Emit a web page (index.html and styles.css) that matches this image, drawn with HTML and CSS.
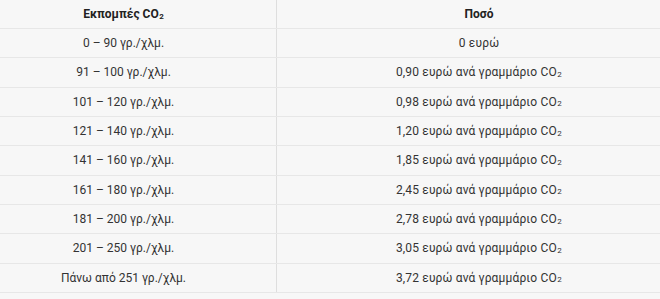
FILE: index.html
```html
<!DOCTYPE html>
<html lang="el">
<head>
<meta charset="utf-8">
<link rel="stylesheet" href="styles.css">
</head>
<body>
<div class="table">
  <div class="row head">
    <div class="cell left">Εκπομπές CO<span class="sub">2</span></div>
    <div class="cell right">Ποσό</div>
  </div>
  <div class="row"><div class="cell left">0 – 90 γρ./χλμ.</div><div class="cell right">0 ευρώ</div></div>
  <div class="row"><div class="cell left">91 – 100 γρ./χλμ.</div><div class="cell right">0,90 ευρώ ανά γραμμάριο CO<span class="sub">2</span></div></div>
  <div class="row"><div class="cell left">101 – 120 γρ./χλμ.</div><div class="cell right">0,98 ευρώ ανά γραμμάριο CO<span class="sub">2</span></div></div>
  <div class="row"><div class="cell left">121 – 140 γρ./χλμ.</div><div class="cell right">1,20 ευρώ ανά γραμμάριο CO<span class="sub">2</span></div></div>
  <div class="row"><div class="cell left">141 – 160 γρ./χλμ.</div><div class="cell right">1,85 ευρώ ανά γραμμάριο CO<span class="sub">2</span></div></div>
  <div class="row"><div class="cell left">161 – 180 γρ./χλμ.</div><div class="cell right">2,45 ευρώ ανά γραμμάριο CO<span class="sub">2</span></div></div>
  <div class="row"><div class="cell left">181 – 200 γρ./χλμ.</div><div class="cell right">2,78 ευρώ ανά γραμμάριο CO<span class="sub">2</span></div></div>
  <div class="row"><div class="cell left">201 – 250 γρ./χλμ.</div><div class="cell right">3,05 ευρώ ανά γραμμάριο CO<span class="sub">2</span></div></div>
  <div class="row"><div class="cell left">Πάνω από 251 γρ./χλμ.</div><div class="cell right">3,72 ευρώ ανά γραμμάριο CO<span class="sub">2</span></div></div>
</div>
</body>
</html>
```
FILE: styles.css
```css
html, body {
  margin: 0;
  padding: 0;
  background: #f7f7f7;
}
body {
  font-family: Roboto, "Noto Sans", sans-serif;
  font-size: 12px;
  color: #333;
  overflow: hidden;
}
.table {
  display: flex;
  flex-direction: column;
  width: 660px;
}
.row {
  display: grid;
  grid-template-columns: 277px 1fr;
  height: 29.33px;
  box-sizing: border-box;
  border-bottom: 1px solid #e7e7e7;
}
.row.head {
  height: 29px;
  font-weight: 700;
  color: #222;
}
.cell {
  display: flex;
  align-items: center;
  justify-content: center;
  white-space: nowrap;
}
.left {
  border-right: 1px solid #dedede;
  padding-right: 29px;
}
.right {
  padding-left: 21px;
  letter-spacing: 0.15px;
}
.head .right {
  letter-spacing: 0;
}
.sub {
  font-size: 8px;
  position: relative;
  top: 2px;
  margin-left: 0.5px;
}
```
